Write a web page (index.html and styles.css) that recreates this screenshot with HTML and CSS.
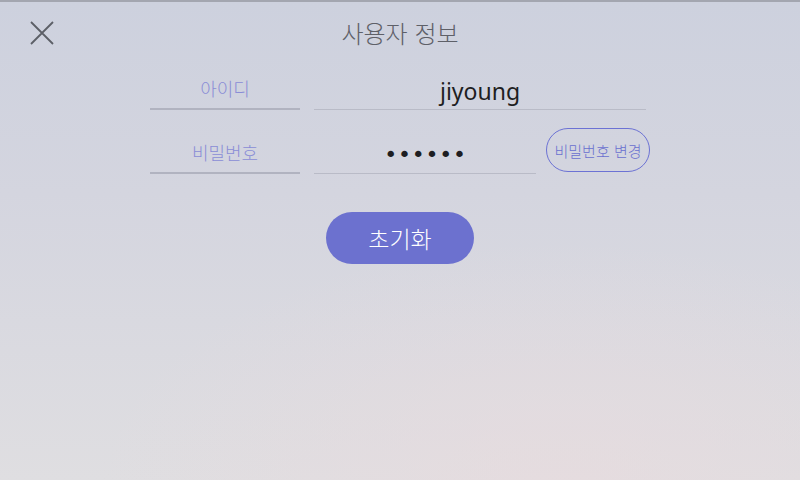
FILE: index.html
```html
<!DOCTYPE html>
<html lang="ko">
<head>
<meta charset="utf-8">
<link rel="stylesheet" href="styles.css">
</head>
<body>
<div class="app">
  <header class="header">
    <button class="close" aria-label="닫기">
      <svg width="24" height="24" viewBox="0 0 24 24"><path d="M1 1L23 23M23 1L1 23" stroke="#5c5f67" stroke-width="1.8" fill="none"/></svg>
    </button>
    <h1 class="title">사용자 정보</h1>
    <span></span>
  </header>
  <main class="form">
    <div class="row">
      <div class="label">아이디</div>
      <div class="value value-wide">jiyoung</div>
    </div>
    <div class="row">
      <div class="label">비밀번호</div>
      <div class="value value-pw">••••••</div>
      <button class="outline-btn">비밀번호 변경</button>
    </div>
    <button class="primary-btn">초기화</button>
  </main>
</div>
</body>
</html>
```
FILE: styles.css
```css
* { box-sizing: border-box; }
html, body { margin: 0; padding: 0; }
body {
  font-family: "Noto Sans CJK KR", "Noto Sans", sans-serif;
}
.app {
  width: 800px;
  height: 480px;
  border-top: 2px solid #a3a6b0;
  background:
    radial-gradient(ellipse 460px 240px at 560px 480px, rgba(232, 219, 222, 0.7), rgba(232, 219, 222, 0) 100%),
    linear-gradient(180deg, #cdd1de 0%, #d4d5df 40%, #dfdee1 100%);
}
.header {
  height: 62px;
  display: grid;
  grid-template-columns: 1fr auto 1fr;
  align-items: center;
}
.close {
  justify-self: start;
  margin-left: 30px;
  padding: 0;
  border: 0;
  background: none;
  width: 24px;
  height: 24px;
  display: flex;
}
.title {
  margin: 0;
  font-size: 24px;
  font-weight: 300;
  color: #5e6068;
  line-height: 30px;
}
.form {
  display: flex;
  flex-direction: column;
  align-items: center;
}
.row {
  width: 500px;
  display: flex;
  align-items: flex-end;
  gap: 14px;
  margin-bottom: 18px;
}
.row:nth-child(2) { gap: 0; }
.label {
  width: 150px;
  height: 46px;
  padding-top: 12px;
  line-height: 24px;
  font-size: 18px;
  font-weight: 300;
  text-align: center;
  color: #8a8dd6;
  border-bottom: 2px solid #b1b3c0;
}
.value {
  height: 46px;
  border-bottom: 1px solid #b9bbc7;
  text-align: center;
  color: #1e1e22;
}
.value-wide {
  width: 332px;
  font-family: "Noto Sans", Roboto, sans-serif;
  font-size: 23px;
  line-height: 30px;
  padding-top: 12px;
}
.value-pw {
  width: 222px;
  margin-left: 14px;
  font-family: "DejaVu Sans", sans-serif;
  font-size: 22px;
  letter-spacing: 0.8px;
  line-height: 24px;
  padding-top: 15px;
  padding-left: 1px;
}
.outline-btn {
  margin-left: 10px;
  margin-bottom: 2px;
  width: 104px;
  height: 44px;
  padding: 0;
  border: 1px solid #6c72d4;
  border-radius: 22px;
  background: transparent;
  color: #6a70cf;
  font-family: "Noto Sans CJK KR", sans-serif;
  font-size: 15px;
  font-weight: 300;
  white-space: nowrap;
}
.primary-btn {
  margin-top: 20px;
  width: 148px;
  height: 52px;
  border: 0;
  border-radius: 26px;
  background: #6c71cf;
  color: #ffffff;
  font-family: "Noto Sans CJK KR", sans-serif;
  font-size: 23px;
  font-weight: 300;
  padding: 0;
}
```
